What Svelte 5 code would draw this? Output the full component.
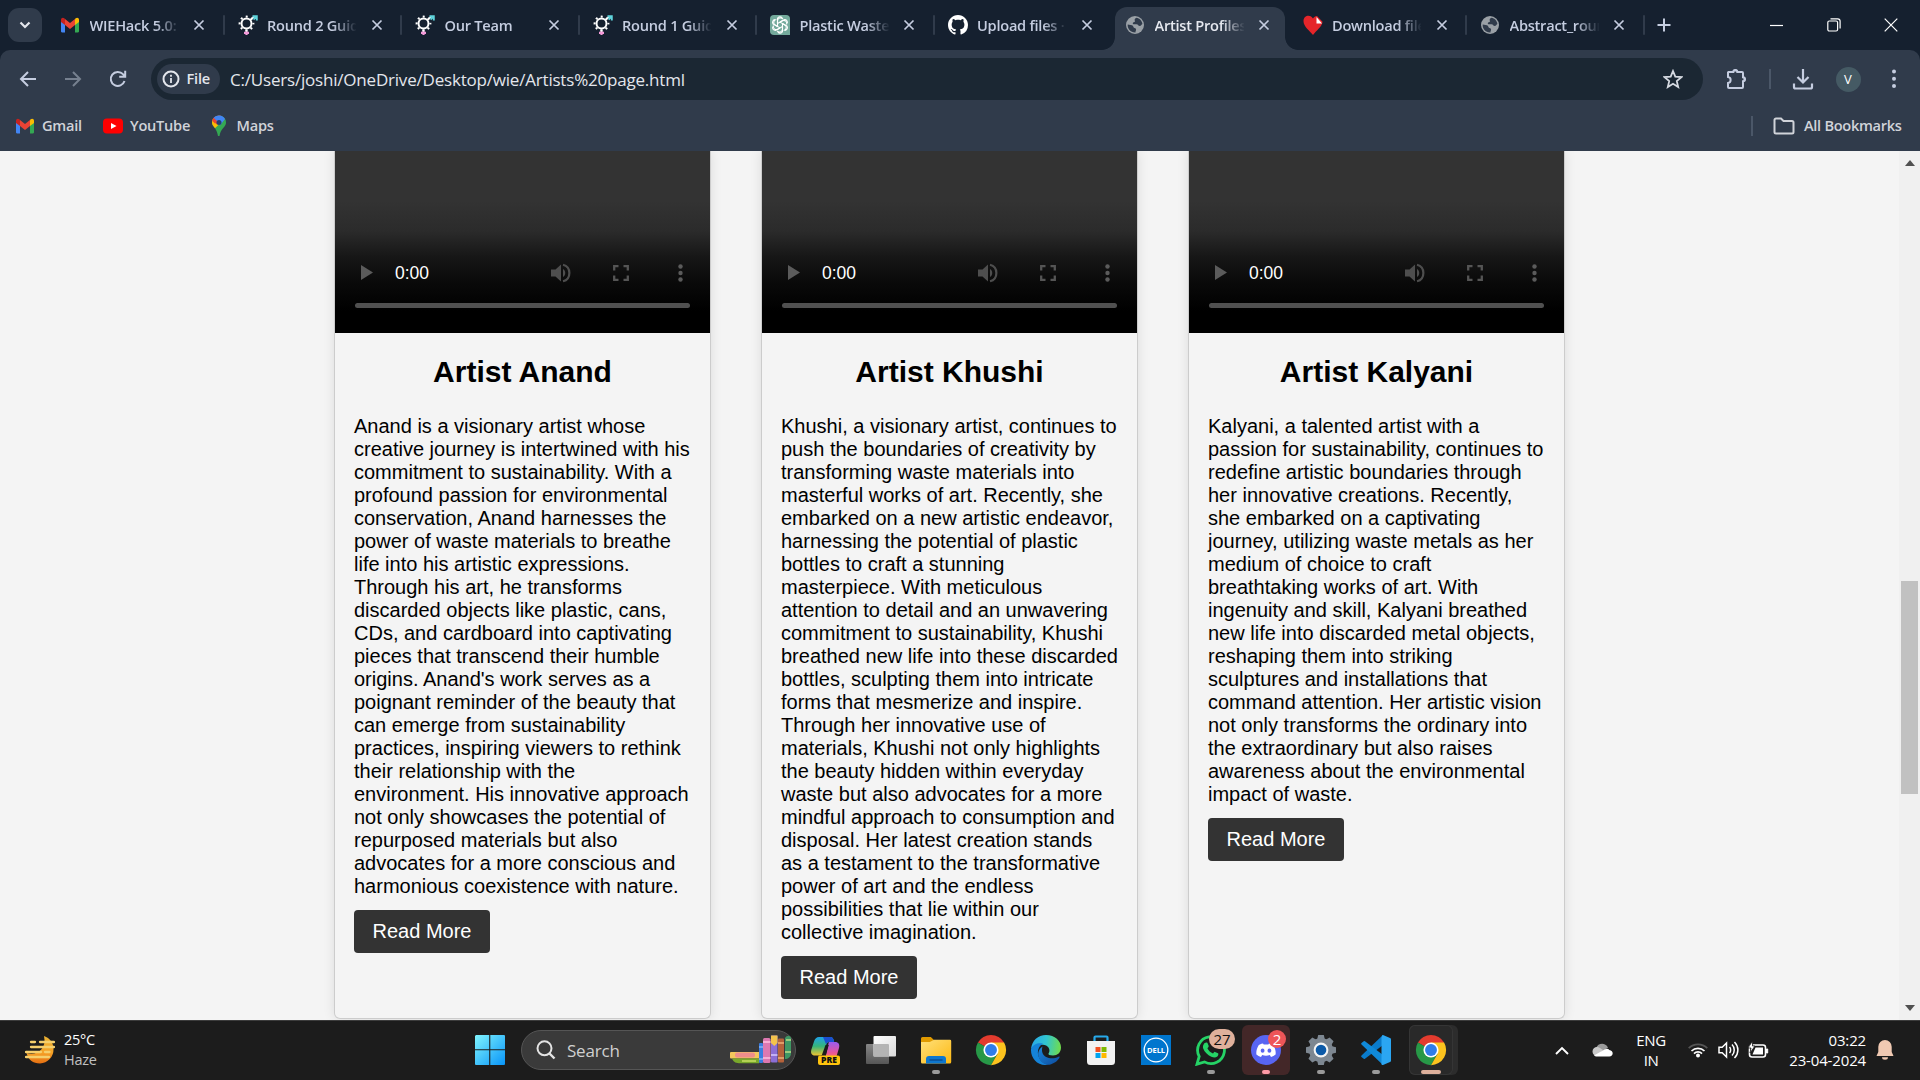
<script>
  const tabs = [
    { icon: 'gmail', title: 'WIEHack 5.0: R' },
    { icon: 'gender', title: 'Round 2 Guidelines' },
    { icon: 'gender', title: 'Our Team' },
    { icon: 'gender', title: 'Round 1 Guidelines' },
    { icon: 'gpt', title: 'Plastic Waste Art' },
    { icon: 'github', title: 'Upload files · wie' },
    { icon: 'globe', title: 'Artist Profiles P', active: true },
    { icon: 'heart', title: 'Download files' },
    { icon: 'globe', title: 'Abstract_round' },
  ];

  const artists = [
    {
      name: 'Artist Anand',
      lines: [
        'Anand is a visionary artist whose',
        'creative journey is intertwined with his',
        'commitment to sustainability. With a',
        'profound passion for environmental',
        'conservation, Anand harnesses the',
        'power of waste materials to breathe',
        'life into his artistic expressions.',
        'Through his art, he transforms',
        'discarded objects like plastic, cans,',
        'CDs, and cardboard into captivating',
        'pieces that transcend their humble',
        "origins. Anand's work serves as a",
        'poignant reminder of the beauty that',
        'can emerge from sustainability',
        'practices, inspiring viewers to rethink',
        'their relationship with the',
        'environment. His innovative approach',
        'not only showcases the potential of',
        'repurposed materials but also',
        'advocates for a more conscious and',
        'harmonious coexistence with nature.',
      ],
    },
    {
      name: 'Artist Khushi',
      lines: [
        'Khushi, a visionary artist, continues to',
        'push the boundaries of creativity by',
        'transforming waste materials into',
        'masterful works of art. Recently, she',
        'embarked on a new artistic endeavor,',
        'harnessing the potential of plastic',
        'bottles to craft a stunning',
        'masterpiece. With meticulous',
        'attention to detail and an unwavering',
        'commitment to sustainability, Khushi',
        'breathed new life into these discarded',
        'bottles, sculpting them into intricate',
        'forms that mesmerize and inspire.',
        'Through her innovative use of',
        'materials, Khushi not only highlights',
        'the beauty hidden within everyday',
        'waste but also advocates for a more',
        'mindful approach to consumption and',
        'disposal. Her latest creation stands',
        'as a testament to the transformative',
        'power of art and the endless',
        'possibilities that lie within our',
        'collective imagination.',
      ],
    },
    {
      name: 'Artist Kalyani',
      lines: [
        'Kalyani, a talented artist with a',
        'passion for sustainability, continues to',
        'redefine artistic boundaries through',
        'her innovative creations. Recently,',
        'she embarked on a captivating',
        'journey, utilizing waste metals as her',
        'medium of choice to craft',
        'breathtaking works of art. With',
        'ingenuity and skill, Kalyani breathed',
        'new life into discarded metal objects,',
        'reshaping them into striking',
        'sculptures and installations that',
        'command attention. Her artistic vision',
        'not only transforms the ordinary into',
        'the extraordinary but also raises',
        'awareness about the environmental',
        'impact of waste.',
      ],
    },
  ];

  const apps = [
    { icon: 'copilot' },
    { icon: 'taskview' },
    { icon: 'explorer', mark: 'dot' },
    { icon: 'chrome' },
    { icon: 'edge' },
    { icon: 'store' },
    { icon: 'dell' },
    { icon: 'whatsapp', mark: 'dot', badge: '27' },
    { icon: 'discord', mark: 'pink', badge: '2' },
    { icon: 'settings', mark: 'dot' },
    { icon: 'vscode', mark: 'dot' },
    { icon: 'chrome', mark: 'wide' },
  ];
</script>

{#snippet gmail()}
  <svg width="20" height="16" viewBox="0 0 20 16">
    <path d="M1 3v11.500A1.300 1.300 0 0 0 2.300 15.500H5V6z" fill="#4285f4" />
    <path d="M19 3v11.500a1.300 1.300 0 0 1-1.300 1H15V6z" fill="#34a853" />
    <path d="M15 2.200V8l4-3V2.800C19 .6 17 .2 15.600 1.300z" fill="#fbbc04" />
    <path d="M5 2.200V8L1 5V2.800C1 .6 3 .2 4.400 1.300z" fill="#c5221f" />
    <path d="M5 8V2l5 3.900L15 2v6l-5 3.900z" fill="#ea4335" />
  </svg>
{/snippet}

{#snippet favicon(name)}
  {#if name === 'gmail'}
    {@render gmail()}
  {:else if name === 'gender'}
    <svg width="20" height="20" viewBox="0 0 20 20" fill="none">
      <circle cx="8.500" cy="8.500" r="5" stroke="#fff" stroke-width="2" />
      <circle cx="8.500" cy="8.500" r="6.900" stroke="#fff" stroke-width="2" stroke-dasharray="2 3.420" stroke-dashoffset="1" />
      <path d="m12.500 5 3.500-3.500" stroke="#fff" stroke-width="1.600" />
      <path d="M14.500 1.200H18.800v4.300M18.500 1.500l-3 3" stroke="#5fd3dc" stroke-width="1.900" />
      <path d="M8.500 14.500v3" stroke="#fff" stroke-width="2" />
      <path d="M6 17.800h5M8.500 16.500v3.500" stroke="#f29ad8" stroke-width="2.200" />
    </svg>
  {:else if name === 'gpt'}
    <svg width="20" height="20" viewBox="0 0 20 20">
      <path d="M4 0h12a4 4 0 0 1 4 4v16H4a4 4 0 0 1-4-4V4a4 4 0 0 1 4-4z" fill="#74aa9c" />
      <g fill="none" stroke="#fff" stroke-width="1.100">
        {#each [0, 60, 120, 180, 240, 300] as a}
          <path transform="rotate({a} 10 10)" d="M7.500 11.400V5.800a3 3 0 0 1 5.400-1.700M10 7.100l4.600-2.600a2.800 2.800 0 0 1 2.600 3.800" />
        {/each}
      </g>
    </svg>
  {:else if name === 'github'}
    <svg width="20" height="20" viewBox="0 0 16 16" fill="#fff">
      <path d="M8 0C3.580 0 0 3.580 0 8c0 3.540 2.290 6.530 5.470 7.590.4.070.55-.17.55-.38 0-.19-.01-.82-.01-1.490-2.010.37-2.530-.49-2.690-.94-.09-.23-.48-.94-.82-1.130-.28-.15-.68-.52-.01-.53.63-.01 1.080.58 1.230.82.72 1.210 1.870.87 2.330.66.07-.52.28-.87.51-1.070-1.780-.2-3.640-.89-3.640-3.950 0-.87.31-1.590.82-2.150-.08-.2-.36-1.020.08-2.120 0 0 .67-.21 2.200.82.64-.18 1.320-.27 2-.27s1.360.09 2 .27c1.530-1.040 2.200-.82 2.200-.82.44 1.100.16 1.920.08 2.120.51.56.82 1.270.82 2.150 0 3.070-1.870 3.750-3.650 3.950.29.25.54.73.54 1.480 0 1.070-.01 1.930-.01 2.200 0 .21.15.46.55.38A8 8 0 0 0 16 8c0-4.420-3.580-8-8-8" />
    </svg>
  {:else if name === 'globe'}
    <svg width="20" height="20" viewBox="0 0 20 20">
      <circle cx="10" cy="10" r="9" fill="#9aa0a6" />
      <path d="M11.500 2.500C10 3.500 9 4 9.300 5.400c.3 1 2.200.6 2.200 2 0 1.600-3.500 1-3.500 2.800l4 .6c1.500.4 1 2.200 2.500 2.200s2-1.500 3-1.700C17 14 14 17 10.500 17.400c0-1.400 1-1.800.5-3-.6-1.300-3-.8-3-2.600L2.800 9.800C3 11.500 3.200 13 4.200 14.300 6 16.500 8.500 17.300 10.500 17.400" fill="#9aa0a6" stroke="none" />
      <path d="M2.700 9.500 7 10.200c1.500.3 1 2.300 2.500 2.800 1.200.4 1.800 1.200 1.500 2.200-.2.800-.6 1.200-.5 2.200C5.500 17.600 2.300 13.500 2.700 9.500zM11.500 2.700c3 .3 5.500 3 5.900 6.300-1 .5-1.400 2-2.600 2-1.800 0-1.300-1.600-3.300-1.800H8.600c-1.200-.2-1-1.800.2-2 1-.2 1.300-.5 1-1.400-.5-1.400.2-2.400 1.700-3.100z" fill="#303b4b" />
    </svg>
  {:else}
    <svg width="20" height="20" viewBox="0 0 20 20">
      <path d="M10 20C7 16 .5 11.500.5 6.200.5 2.500 3 .8 5.400.8 7.500.8 9 2 10 3.500 11 2 12.200 1 14 1l5.500 5.800C19.300 11.500 13 16 10 20z" fill="#e5252a" />
      <path d="M13.500 2 19 8.500H13.500z" fill="#fff" />
    </svg>
  {/if}
{/snippet}

{#snippet appIcon(name)}
  {#if name === 'copilot'}
    <svg width="32" height="32" viewBox="0 0 32 32">
      <defs>
        <linearGradient id="cpA" x1="0" y1="0" x2="0" y2="1"><stop offset="0" stop-color="#1fa2e8" /><stop offset=".5" stop-color="#35b57a" /><stop offset="1" stop-color="#f0c430" /></linearGradient>
        <linearGradient id="cpB" x1="0" y1="0" x2="0" y2="1"><stop offset="0" stop-color="#9a5cf0" /><stop offset=".6" stop-color="#e8559a" /><stop offset="1" stop-color="#ff8a4a" /></linearGradient>
      </defs>
      <path d="M9 3h11c3 0 3.500 2 4.200 5h-5c-2 0-2.600 1.500-3.200 3.500l-2 7c-.6 2-1.600 3-4 3H5c-3.500 0-4.600-2.500-3.600-6L4 7.500C5 4.500 6.500 3 9 3z" fill="url(#cpA)" />
      <path d="M13 3h7c3 0 3.500 2 4.200 5h-5c-2 0-2.600 1-3 2.500z" fill="#1b4fd0" />
      <path d="M19 8h6c3.500 0 5 2.200 4 6l-2.400 8c-.8 2.600-2 4-5 4H12c3 0 3.200-2.500 4-5l2-9c.4-2 .4-3 1-4z" fill="url(#cpB)" />
      <path d="M15.500 11h3.300L15.500 22h-4z" fill="#1c1c1c" />
      <rect x="8" y="21.500" width="22" height="9.500" rx="2" fill="#ffc40d" />
      <text class="pre" x="19" y="29.300" text-anchor="middle">PRE</text>
    </svg>
  {:else if name === 'taskview'}
    <svg width="32" height="32" viewBox="0 0 32 32">
      <defs>
        <linearGradient id="tvA" x1="0" y1="0" x2="1" y2="1"><stop offset="0" stop-color="#fff" /><stop offset="1" stop-color="#d9d9d9" /></linearGradient>
        <linearGradient id="tvB" x1="0" y1="0" x2="0" y2="1"><stop offset="0" stop-color="#868686" /><stop offset="1" stop-color="#565656" /></linearGradient>
      </defs>
      <rect x="1" y="10" width="23" height="20" rx="1" fill="url(#tvB)" />
      <rect x="8.500" y="2" width="22.500" height="20.500" rx="1" fill="url(#tvA)" />
      <path d="M8.500 10H23a1 1 0 0 1 1 1v11.500H8.500z" fill="#b4b4b4" />
    </svg>
  {:else if name === 'explorer'}
    <svg width="32" height="32" viewBox="0 0 32 32">
      <defs><linearGradient id="fe" x1="0" y1="0" x2="1" y2="1"><stop offset="0" stop-color="#ffe07a" /><stop offset="1" stop-color="#fdb913" /></linearGradient></defs>
      <path d="M1 4.500A1.500 1.500 0 0 1 2.500 3h8.300L14 6l-3 5H1z" fill="#e09a00" />
      <path d="M1 8h8.800L14 5.800h16a1.200 1.200 0 0 1 1.200 1.200v21a1.500 1.500 0 0 1-1.500 1.500h-27A1.500 1.500 0 0 1 1 28z" fill="url(#fe)" />
      <path d="M6 29.500V25a3 3 0 0 1 3-3h14a3 3 0 0 1 3 3v4.500z" fill="#0e77cf" />
      <path d="M10 26h12" stroke="#0a4f96" stroke-width="1.500" stroke-linecap="round" />
    </svg>
  {:else if name === 'chrome'}
    <svg width="32" height="32" viewBox="0 0 48 48">
      <path d="M24 24 4.350 12.650A22.700 22.700 0 0 1 43.650 12.650z" fill="#e33b2e" />
      <path d="M24 24 4.350 12.650A22.700 22.700 0 0 0 24 46.700L34 29z" fill="#279847" />
      <path d="M24 12.650h19.650A22.700 22.700 0 0 1 24 46.700l9.830-17.030z" fill="#fcc31e" />
      <circle cx="24" cy="24" r="11.350" fill="#fff" />
      <circle cx="24" cy="24" r="8.900" fill="#2f7de9" />
    </svg>
  {:else if name === 'edge'}
    <svg width="32" height="32" viewBox="0 0 32 32">
      <defs>
        <linearGradient id="egA" x1="0" y1=".3" x2="1" y2=".4"><stop offset="0" stop-color="#28a8ea" /><stop offset=".5" stop-color="#31c5d0" /><stop offset="1" stop-color="#6fdc4e" /></linearGradient>
        <linearGradient id="egB" x1="0" y1="0" x2="1" y2="1"><stop offset="0" stop-color="#1a87dc" /><stop offset="1" stop-color="#0e4b9c" /></linearGradient>
      </defs>
      <path d="M1 15C2 6.500 8 1 16 1c9 0 15 6 15 12.500 0 5-3.600 8-8 8-3.500 0-5-1-4.500-2 2-2.500 1-7.500-4-8.500C9 10 3 12 1 15z" fill="url(#egA)" />
      <path d="M1 15c2-4.500 7-6.500 12-5.300-4 2-5.600 6-5 10.300.8 5.500 5 9.500 10 10.800C8 32.600.4 24.500 1 15z" fill="#1583d8" />
      <path d="M12.500 12.500C9 15 7.500 18.500 8.500 22.500 10 28 15 31.600 19.500 30.700c4.500-1 8.500-4 10-7.200.4-1-.3-1.200-1-.8-6 3-14 1.500-16-3.700-.8-2.300-.6-4.600 0-6.500z" fill="url(#egB)" />
    </svg>
  {:else if name === 'store'}
    <svg width="32" height="32" viewBox="0 0 32 32">
      <path d="M9.500 8V3.500A1 1 0 0 1 10.500 2.500h11a1 1 0 0 1 1 1V8" fill="none" stroke="#27a9ea" stroke-width="2.200" />
      <path d="M2 7h28v20.500a3.500 3.500 0 0 1-3.500 3.500h-21A3.500 3.500 0 0 1 2 27.500z" fill="#f2f2f2" />
      <path d="M10.500 13h5v5h-5z" fill="#f25022" /><path d="M16.500 13h5v5h-5z" fill="#7fba00" />
      <path d="M10.500 19h5v5h-5z" fill="#00a4ef" /><path d="M16.500 19h5v5h-5z" fill="#ffb900" />
    </svg>
  {:else if name === 'dell'}
    <svg width="32" height="32" viewBox="0 0 32 32">
      <path d="M1 1h30v30H1z" fill="#0076ce" />
      <circle cx="16" cy="16" r="11.800" fill="none" stroke="#fff" stroke-width="1.300" />
      <text class="dell" x="16" y="18.800" text-anchor="middle">DELL</text>
    </svg>
  {:else if name === 'whatsapp'}
    <svg width="32" height="32" viewBox="0 0 32 32">
      <path d="M2 30.200 4.200 22.500A13.400 13.400 0 1 1 9.500 27.900z" fill="none" stroke="#25d366" stroke-width="2.800" />
      <path d="M11.400 8.500c.7 0 1 .2 1.300 1l1 2.500c.2.700-.8 1.700-1.300 2.300 1.300 2.600 3 4.100 5.600 5.300.8-.8 1.400-2 2-1.700l3 1.400c.8.500.2 2.500-.7 3.300-1.600 1.300-3.600 1.200-6 .2-3.800-1.700-6.600-4.700-8-8-1-2.700.5-6.300 3.100-6.300z" fill="#25d366" />
    </svg>
  {:else if name === 'discord'}
    <svg width="32" height="32" viewBox="0 0 32 32">
      <circle cx="16" cy="16" r="15" fill="#5865f2" />
      <path d="M11.500 9.800 13 9.400l.7 1.200a16 16 0 0 1 4.600 0l.7-1.200 1.500.4 2.700 1.200c2 3.200 2.800 6.300 2.400 9.600a11 11 0 0 1-4.600 2.300l-1.200-1.800a13 13 0 0 1-7.600 0L11 22.900a11 11 0 0 1-4.600-2.300c-.4-3.300.5-6.400 2.400-9.600z" fill="#fff" />
      <ellipse cx="12.600" cy="16.700" rx="1.900" ry="2.100" fill="#5865f2" /><ellipse cx="19.400" cy="16.700" rx="1.900" ry="2.100" fill="#5865f2" />
    </svg>
  {:else if name === 'settings'}
    <svg width="32" height="32" viewBox="0 0 32 32">
      <g fill="#7d8791">
        <circle cx="16" cy="16" r="12" />
        {#each [0, 45, 90, 135, 180, 225, 270, 315] as a}
          <path transform="rotate({a} 16 16)" d="M12 6 13.200 1h5.600L20 6z" />
        {/each}
      </g>
      <circle cx="16" cy="16" r="7.400" fill="#f4f4f4" /><circle cx="16" cy="16" r="5.300" fill="#0c5aa8" />
    </svg>
  {:else}
    <svg width="32" height="32" viewBox="0 0 32 32">
      <path d="M23 1v10L5 24.800a1 1 0 0 1-1.300 0L1.500 23a1 1 0 0 1 0-1.500z" fill="#0a7bcb" />
      <path d="M23 31V21L5 7.200a1 1 0 0 0-1.300 0L1.500 9a1 1 0 0 0 0 1.500z" fill="#1089d8" />
      <path d="M23 1l7 3a1.500 1.500 0 0 1 1 1.500v21a1.500 1.500 0 0 1-1 1.500l-7 3c-.8.200-1.500-.2-1.500-1v-26c0-1 .6-3.200 1.500-3z" fill="#2ba6f2" />
    </svg>
  {/if}
{/snippet}

<div class="screen">
  <header class="tabstrip">
    <div class="tabsearch">
      <svg width="14" height="10" viewBox="0 0 14 10"><path d="m2.500 2.500 4.500 4.500 4.500-4.500" fill="none" stroke="#e3e6ec" stroke-width="2.200" /></svg>
    </div>
    {#each tabs as tab, i}
      <div class="tab" class:active={tab.active} class:plain={i === 5}>
        {#if tab.active}<span class="flare left"></span><span class="flare right"></span>{/if}
        <span class="fav">{@render favicon(tab.icon)}</span>
        <span class="title">{tab.title}</span>
        <svg class="x" width="12" height="12" viewBox="0 0 12 12"><path d="m1.500 1.500 9 9m0-9-9 9" fill="none" stroke="currentColor" stroke-width="1.700" /></svg>
      </div>
    {/each}
    <div class="newtab">
      <svg width="14" height="14" viewBox="0 0 14 14"><path d="M7 .5v13M.5 7h13" stroke="#c5cde0" stroke-width="2" /></svg>
    </div>
    <div class="winctl">
      <svg width="14" height="14" viewBox="0 0 14 14"><path d="M0 7.500h13" stroke="#fff" stroke-width="1.200" /></svg>
      <svg width="14" height="14" viewBox="0 0 14 14" fill="none" stroke="#fff" stroke-width="1.200"><rect x=".8" y="3" width="9.800" height="10" rx="1.500" /><path d="M3.500.8h7.200a2.400 2.400 0 0 1 2.400 2.400V10.500" /></svg>
      <svg width="14" height="14" viewBox="0 0 14 14"><path d="m.7.7 12.600 12.600m0-12.600L.7 13.300" stroke="#fff" stroke-width="1.200" /></svg>
    </div>
  </header>

  <div class="browserbar">
    <div class="toolbar">
      <div class="nav">
        <svg width="20" height="20" viewBox="0 0 20 20" fill="none" stroke="#c5cde0" stroke-width="2"><path d="M18 10H3M10 3l-7 7 7 7" /></svg>
        <svg width="20" height="20" viewBox="0 0 20 20" fill="none" stroke="#76808f" stroke-width="2"><path d="M2 10h15M10 3l7 7-7 7" /></svg>
        <svg width="20" height="20" viewBox="0 0 20 20" fill="none" stroke="#c5cde0" stroke-width="2"><path d="M16.500 12A7 7 0 1 1 15 5.200L17 7.200M17.200 1.800v6h-6" /></svg>
      </div>
      <div class="omni">
        <div class="chip">
          <svg width="18" height="18" viewBox="0 0 18 18"><circle cx="9" cy="9" r="7.500" fill="none" stroke="#e3e6ec" stroke-width="2" /><path d="M9 8v5M9 4.800v2" stroke="#e3e6ec" stroke-width="1.800" /></svg>
          <span>File</span>
        </div>
        <span class="url">C:/Users/joshi/OneDrive/Desktop/wie/Artists%20page.html</span>
        <svg class="star" width="20" height="20" viewBox="0 0 20 20"><path d="m10 2 2.300 5.600 6.100.5-4.600 4 1.400 5.900L10 14.800 4.800 18l1.400-5.900-4.600-4 6.100-.5z" fill="none" stroke="#d6dae2" stroke-width="1.800" /></svg>
      </div>
      <svg class="puzzle" width="24" height="24" viewBox="0 0 24 24"><path d="M4.500 5h4.800a2 2 0 0 1 4 0H18a1 1 0 0 1 1 1v4.300a2 2 0 0 1 0 4V20a1 1 0 0 1-1 1H5a1 1 0 0 1-1-1v-4c3.500-.8 3.500-5.500 0-6V5.500z" fill="none" stroke="#c5cde0" stroke-width="2" /><path d="M9.500 4.500c0-3 4-3 4 0zM19.500 10.500c2.800 0 2.800 3.800 0 3.800z" fill="#c5cde0" /></svg>
      <span class="vline"></span>
      <svg class="dl" width="22" height="22" viewBox="0 0 22 22" fill="none" stroke="#c5cde0" stroke-width="2.200"><path d="M11 1v13M5.500 9l5.500 5.500L16.500 9M2 15.500V19a1.500 1.500 0 0 0 1.500 1.500h15A1.500 1.500 0 0 0 20 19v-3.500" /></svg>
      <span class="avatar">V</span>
      <svg class="menu" width="6" height="20" viewBox="0 0 6 20" fill="#c5cde0"><circle cx="3" cy="2.500" r="2" /><circle cx="3" cy="9.800" r="2" /><circle cx="3" cy="17" r="2" /></svg>
    </div>
    <div class="bookmarks">
      <span class="bm b1">{@render gmail()}<em>Gmail</em></span>
      <span class="bm b2"><svg width="20" height="16" viewBox="0 0 20 16"><rect y=".5" width="20" height="15" rx="4" fill="#f00" /><path d="m8 5 5.500 3L8 11z" fill="#fff" /></svg><em>YouTube</em></span>
      <span class="bm b3">
        <svg width="14" height="22" viewBox="0 0 14 22">
          <path d="M6 21C5.400 18 4.500 15.500 3 13.300 1 10.800 0 9.500 0 7.500a7 7 0 0 1 14 0c0 2-1 3.500-3 5.800C9 15.500 8 18 7.500 21z" fill="#34a853" />
          <path d="M3 13.300C1 10.800 0 9.500 0 7.500 0 6 .5 4.500 1.600 3L11 5.500z" fill="#fbbc04" />
          <path d="M1.600 3A7 7 0 0 1 9 .8L5 9.500.3 5.500z" fill="#ea4335" /><path d="M1.600 3A7 7 0 0 1 13 4L8 10.500 4.500 6z" fill="#4285f4" /><path d="M1.600 3 5 6 3 8.500.4 6C.5 5 1 3.800 1.600 3z" fill="#ea4335" />
          <circle cx="7" cy="7.500" r="2.500" fill="#25406e" />
        </svg><em>Maps</em></span>
      <span class="vline all"></span>
      <svg width="22" height="18" viewBox="0 0 22 18"><path d="M1.500 3A1.500 1.500 0 0 1 3 1.500h5l2.500 2.500H19A1.500 1.500 0 0 1 20.500 5.500v9.500a1.500 1.500 0 0 1-1.500 1.500H3A1.500 1.500 0 0 1 1.500 15z" fill="none" stroke="#d0d3d9" stroke-width="2" /></svg>
      <em class="alltext">All Bookmarks</em>
    </div>
  </div>

  <main>
    <div class="cards">
      {#each artists as artist}
        <article>
          <div class="video">
            <div class="controls">
              <svg class="play" width="12" height="15" viewBox="0 0 12 15"><path d="M0 0 12 7.500 0 15z" fill="#5b5b5b" /></svg>
              <span class="time">0:00</span>
              <svg class="vol" width="20" height="20" viewBox="0 0 20 20"><path d="M0 6.500h4.500L10 1.500v17L4.500 13.500H0z" fill="#4e4e4e" /><path d="M12 6c3 1.500 3 6.500 0 8z" fill="#4e4e4e" /><path d="M12 1.700c8.500 2 8.500 14.600 0 16.600" fill="none" stroke="#4e4e4e" stroke-width="2.200" /></svg>
              <svg class="full" width="16" height="16" viewBox="0 0 16 16"><path d="M5.500 1.200H1.200V5.500M10.500 1.200h4.300V5.500M1.200 10.500v4.300H5.500M14.800 10.500v4.300H10.500" fill="none" stroke="#555" stroke-width="2.300" /></svg>
              <svg class="more" width="5" height="18" viewBox="0 0 5 18" fill="#5b5b5b"><circle cx="2.500" cy="2.500" r="2.200" /><circle cx="2.500" cy="9" r="2.200" /><circle cx="2.500" cy="15.500" r="2.200" /></svg>
            </div>
            <div class="progress"></div>
          </div>
          <h2>{artist.name}</h2>
          <p>{artist.lines.join('\n')}</p>
          <button>Read More</button>
        </article>
      {/each}
    </div>
    <div class="scroll">
      <svg width="10" height="6" viewBox="0 0 10 6"><path d="M5 0l5 6H0z" fill="#505050" /></svg>
      <div class="thumb"></div>
      <svg width="10" height="6" viewBox="0 0 10 6"><path d="M0 0h10L5 6z" fill="#505050" /></svg>
    </div>
  </main>

  <footer>
    <div class="weather">
      <svg width="30" height="30" viewBox="0 0 30 30">
        <defs><linearGradient id="moon" x1="0" y1="0" x2="0" y2="1"><stop offset="0" stop-color="#eab233" /><stop offset=".6" stop-color="#f5a227" /><stop offset="1" stop-color="#e56f12" /></linearGradient></defs>
        <path d="M19 1c6 2 9.500 7 9.500 13A14 14 0 0 1 15 28.500C8 28.500 3 24.500 1.500 18 12 21 22 14 19 1z" fill="url(#moon)" />
        <path d="M6 7h4M15 7h14M6 12h23M1 17h15M20 17h4.500M1 22h23" stroke="#f5cf6c" stroke-width="2.300" stroke-linecap="round" />
      </svg>
      <div><span>25°C</span><span class="dim">Haze</span></div>
    </div>
    <svg class="start" width="30" height="30" viewBox="0 0 30 30">
      <defs><linearGradient id="win" x1="0" y1="0" x2="30" y2="30" gradientUnits="userSpaceOnUse"><stop offset="0" stop-color="#80f4fe" /><stop offset="1" stop-color="#0894f8" /></linearGradient></defs>
      <path d="M1 0h13.200v14.200H0V1zM15.300 0H29a1 1 0 0 1 1 1v13.200H15.300zM0 15.300h14.200V30H1a1 1 0 0 1-1-1zM15.300 15.300H30V29a1 1 0 0 1-1 1H15.300z" fill="url(#win)" />
    </svg>
    <div class="search">
      <svg width="20" height="20" viewBox="0 0 20 20"><circle cx="8.500" cy="8.300" r="7" fill="none" stroke="#e4e4e4" stroke-width="2" /><path d="m13.500 13.500 5 5" stroke="#e4e4e4" stroke-width="2.400" /></svg>
      <span>Search</span>
      <svg class="books" width="64" height="32" viewBox="0 0 64 32">
        <rect x="1" y="18" width="30" height="6.500" rx="1" fill="#f3c65d" /><rect x="6" y="18.500" width="20" height="5" rx="2" fill="#ee8d8b" />
        <path d="M3 24.500h27v4.700H10c-4 0-6-2-7-4.700z" fill="#79a82b" /><path d="M13 27h14" stroke="#c8df63" stroke-width="1.500" />
        <rect x="30" y="9" width="4" height="20" rx="1" fill="#3b7de0" /><path d="M30 13h4m-4 12h4" stroke="#a9d0ff" />
        <rect x="34" y="4" width="7.500" height="25" rx="1.500" fill="#dd78b1" /><path d="M34 8h7.500M34 24h7.500" stroke="#ffc0df" stroke-width="1.500" />
        <rect x="42" y="1.500" width="6.500" height="27" rx="1" fill="#8c6ed6" /><path d="M42 1.500h6.500V9l-3.200 3L42 9z" fill="#f3c34c" /><path d="M42 21h6.500" stroke="#d6c8ff" stroke-width="1.500" />
        <rect x="49" y="4.500" width="6" height="24" rx="1" fill="#b5623a" /><path d="M49 9h6m-6 15h6" stroke="#eeb077" stroke-width="1.500" />
        <path d="M56 4c2-3 5-3 6 0v15c0 4-3 6-6 6z" fill="#3f9764" /><path d="M57 6h5M56 18h6" stroke="#b9dc88" stroke-width="1.500" />
      </svg>
    </div>
    <div class="apps">
      {#each apps as app}
        <div class="app {app.icon} {app.mark ?? ''}">
          {@render appIcon(app.icon)}
          {#if app.badge}<b>{app.badge}</b>{/if}
          {#if app.mark}<i></i>{/if}
        </div>
      {/each}
    </div>
    <div class="tray">
      <svg class="caret" width="14" height="9" viewBox="0 0 14 9"><path d="m1 8 6-6 6 6" fill="none" stroke="#fff" stroke-width="1.900" /></svg>
      <svg class="cloud" width="21" height="14" viewBox="0 0 21 14"><path d="M4 5C6 0 13-1 16 4.500L10 9z" fill="#9a9a9a" /><path d="M5 13a4.500 4.500 0 0 1 0-9c2 0 3 1 6 3L6 13z" fill="#c9c9c9" /><path d="M2 12.500 13 6.300c3-1.500 4 .2 4.300.7 5 .8 4 6.500 0 6.500H5c-1.500 0-2-.2-3-1z" fill="#fff" /></svg>
      <div class="lang"><span>ENG</span><span>IN</span></div>
      <svg class="wifi" width="20" height="16" viewBox="0 0 20 16" fill="none" stroke-width="1.700"><path d="M.7 6.200a13 13 0 0 1 18.600 0" stroke="#555" /><path d="M3.500 9a9.200 9.200 0 0 1 13 0M6 11.600a5.700 5.700 0 0 1 8 0" stroke="#fff" /><circle cx="10" cy="13.500" r="2" fill="#fff" /></svg>
      <svg class="spk" width="21" height="18" viewBox="0 0 21 18" fill="none" stroke="#fff" stroke-width="1.500"><path d="M1 6.200h3.200L8.500 2v14l-4.300-4.200H1zM11.500 6c1.500 1.500 1.500 4.500 0 6M14 3.500c3 3 3 8 0 11M16.500 1c4.500 4.500 4.500 11.500 0 16" /></svg>
      <svg class="bat" width="21" height="18" viewBox="0 0 21 18"><rect x="1.500" y="4" width="16" height="12" rx="2.500" fill="none" stroke="#fff" stroke-width="1.600" /><path d="M7.500 6.500h7.500v7H4.500z" fill="#fff" /><path d="M18.500 8h1.200v4h-1.200z" fill="#fff" stroke="#fff" /><path d="M4.500 0 0 7h3L2 12l5-7H4.500z" fill="#fff" stroke="#1c1c1c" stroke-width=".8" /></svg>
      <div class="clock"><span>03:22</span><span>23-04-2024</span></div>
      <svg class="bell" width="18" height="20" viewBox="0 0 18 20"><path d="M9 0a6.700 6.700 0 0 1 6.700 6.700v5.300L17.500 16H.5L2.300 12V6.700A6.700 6.700 0 0 1 9 0zM6 17.200h6a3 2.500 0 0 1-6 0z" fill="#f0c9b2" /></svg>
    </div>
  </footer>
</div>

<style>
  :global(body) { margin: 0; overflow: hidden; }
  svg { display: block; flex: none; }
  em { font-style: normal; }
  .screen { width: 1920px; height: 1080px; display: flex; flex-direction: column; overflow: hidden; background: #f4f4f4; font-family: "Open Sans", "Noto Sans", sans-serif; }

  .tabstrip { height: 50px; flex: none; display: flex; background: #15202f; color: #c5cde0; }
  .tabsearch { width: 34px; height: 34px; margin: 8px 4px 0 8px; border-radius: 11px; background: #303b4b; display: flex; align-items: center; justify-content: center; flex: none; }
  .tab { box-sizing: border-box; position: relative; width: 177.500px; height: 50px; padding-left: 14px; display: flex; align-items: center; flex: none; }
  .tab::after { content: ""; position: absolute; right: -1px; top: 15px; width: 2px; height: 20px; background: #303b4b; border-radius: 1px; }
  .tab.active::after, .tab.plain::after { display: none; }
  .tab.active { z-index: 1; }
  .tab.active::before { content: ""; position: absolute; left: 4px; right: 4px; top: 7px; bottom: 0; background: #303b4b; border-radius: 12px 12px 0 0; }
  .flare { position: absolute; bottom: 0; width: 13px; height: 13px; }
  .flare.left { left: -9px; background: radial-gradient(circle at 0 0, transparent 12.500px, #303b4b 13.200px); }
  .flare.right { right: -9px; background: radial-gradient(circle at 100% 0, transparent 12.500px, #303b4b 13.200px); }
  .fav { position: relative; width: 20px; display: flex; justify-content: center; }
  .title { position: relative; width: 89px; margin-left: 9.500px; font-size: 14.600px; font-weight: 600; letter-spacing: -.25px; white-space: nowrap; overflow: hidden; -webkit-mask-image: linear-gradient(90deg, #000 66px, transparent 90px); mask-image: linear-gradient(90deg, #000 66px, transparent 90px); }
  .active .title { color: #e6e9f0; }
  .x { position: relative; margin-left: 14.500px; }
  .newtab { margin: 18px 0 0 13px; }
  .winctl { margin: 18px 22px 0 auto; display: flex; gap: 43px; }

  .browserbar { height: 101px; flex: none; background: #303b4b; border-radius: 10px 10px 0 0; box-shadow: 0 -10px 0 #15202f; clip-path: inset(0); }
  .toolbar { height: 58px; display: flex; align-items: center; }
  .nav { display: flex; gap: 25px; margin-left: 17.500px; }
  .omni { width: 1552px; height: 42px; margin-left: 23px; border-radius: 21px; background: #1b2733; display: flex; align-items: center; color: #e3e6ec; }
  .chip { width: 63px; height: 30px; margin-left: 6px; border-radius: 15px; background: #303b4b; display: flex; align-items: center; gap: 6.500px; font-size: 14.600px; font-weight: 600; letter-spacing: -.2px; }
  .chip span { position: relative; top: -1px; }
  .chip svg { margin-left: 5.500px; }
  .url { margin-left: 10.500px; font-size: 17px; letter-spacing: -.2px; }
  .star { margin: 0 19.500px 0 auto; }
  .puzzle { margin-left: 21.500px; }
  .vline { width: 2px; height: 20px; background: #4b5768; margin-left: 21px; }
  .dl { margin-left: 21px; }
  .avatar { width: 25px; height: 25px; margin-left: 21.500px; border-radius: 50%; background: #455a64; color: #fff; font-size: 13px; display: flex; align-items: center; justify-content: center; }
  .menu { margin-left: 30px; }
  .bookmarks { height: 35px; display: flex; align-items: center; color: #d0d3d9; font-size: 14.600px; font-weight: 600; letter-spacing: -.25px; }
  .bookmarks em { position: relative; top: -.5px; }
  .bm { display: flex; align-items: center; gap: 7px; }
  .b1 { margin-left: 15px; width: 88px; }
  .b2 { width: 108.500px; }
  .b3 { gap: 11px; }
  .vline.all { margin: 0 20px 0 auto; }
  .alltext { width: 98px; margin: 0 18px 0 9px; white-space: nowrap; letter-spacing: -.3px; }

  main { height: 869px; flex: none; display: flex; font-family: "Liberation Sans", Arial, sans-serif; overflow: hidden; }
  .cards { flex: 1; display: flex; gap: 50px; margin-left: 334px; height: 868px; }
  article { box-sizing: border-box; width: 377px; height: 868px; border: 1px solid #ccc; border-top: 0; border-radius: 0 0 6px 6px; box-shadow: 0 0 12px rgba(0, 0, 0, .1); background: #f4f4f4; }
  .video { height: 182px; background: linear-gradient(#333 0, #333 50px, #2b2b2b 80px, #171717 105px, #0a0a0a 130px, #000 160px); }
  .controls { padding-top: 111px; height: 21px; display: flex; align-items: center; }
  .play { margin-left: 26px; }
  .time { position: relative; top: 1px; margin-left: 22px; width: 40px; font-size: 17.500px; color: #fff; }
  .vol { margin-left: 115.500px; }
  .full { margin-left: 42px; }
  .more { margin-left: 49.500px; }
  .progress { width: 335px; height: 5px; margin: 20px 0 0 20px; border-radius: 3px; background: #505050; }
  h2 { margin: 21px 0 0; height: 36px; line-height: 36px; font-size: 30px; text-align: center; color: #000; }
  p { margin: 25px 0 0 19px; font-size: 20px; line-height: 23px; white-space: pre; color: #000; }
  button { display: block; margin: 12px 0 0 19px; width: 136px; height: 43px; padding: 0; border: 0; border-radius: 4px; background: #333; color: #fff; font: 20px "Liberation Sans", Arial, sans-serif; }
  .scroll { width: 21px; background: #f0f0f0; display: flex; flex-direction: column; align-items: center; padding: 9px 0; box-sizing: border-box; }
  .thumb { width: 17px; height: 213px; margin: 415px 0 auto; background: #c1c1c1; }

  footer { box-sizing: border-box; height: 60px; flex: none; border-top: 1px solid #3c3c3c; padding-bottom: 1px; background: #1c1c1c; display: flex; align-items: center; color: #fff; }
  .weather { width: 449px; display: flex; align-items: center; font-size: 14.500px; line-height: 20px; letter-spacing: -.3px; }
  .weather svg { margin: 0 9px 0 25px; }
  .weather span { display: block; }
  .dim { color: #c0c0c0; }
  .start { margin-left: 26px; }
  .search { box-sizing: border-box; width: 275px; height: 40px; margin-left: 16px; border: 1px solid #555; border-radius: 20px; background: #3a3a3a; display: flex; align-items: center; font-size: 17px; color: #d0d0d0; }
  .search > svg { margin-left: 14px; }
  .search span { margin-left: 11px; letter-spacing: -.2px; }
  .search .books { margin: 0 2px 0 auto; }
  .apps { display: flex; margin-left: 6px; gap: 7px; }
  .app { position: relative; width: 48px; height: 50px; display: flex; align-items: center; justify-content: center; border-radius: 6px; }
  .app i { position: absolute; left: 20px; bottom: 1px; width: 8px; height: 4px; border-radius: 2px; background: #9a9a9a; }
  .app.wide i { left: 14px; width: 20px; background: #deb09c; }
  .app.pink i { background: #ff9aa6; }
  .app.discord { background: #432728; }
  .app.wide { width: 44px; margin-left: 2px; background: #292929; box-shadow: 0 0 0 1px #353535 inset, 5px 0 0 #2c2c2c; }
  .app.wide i { left: 12px; }
  .app b { position: absolute; left: 22px; top: 4px; width: 26px; height: 20px; border-radius: 10px; background: #dfb09b; color: #111; font-size: 15px; line-height: 20px; text-align: center; font-weight: 400; }
  .app.discord b { left: 26px; top: 5px; width: 18px; height: 18px; line-height: 18px; background: #ee5558; color: #fff; }
  .pre { font: 800 8.500px "Open Sans", sans-serif; fill: #111; }
  .dell { font: 700 7.500px "Open Sans", sans-serif; fill: #fff; }
  .tray { margin-left: auto; display: flex; align-items: center; font-size: 15px; line-height: 20px; letter-spacing: -.4px; }
  .tray span { display: block; }
  .cloud { margin-left: 23px; }
  .lang { width: 40px; text-align: center; margin-left: 18px; }
  .wifi { margin-left: 16.500px; }
  .spk { margin-left: 10px; }
  .bat { margin-left: 9px; }
  .clock { width: 90px; margin-left: 7.500px; text-align: right; white-space: nowrap; letter-spacing: -.15px; }
  .bell { margin: 0 26px 0 10px; }
</style>
